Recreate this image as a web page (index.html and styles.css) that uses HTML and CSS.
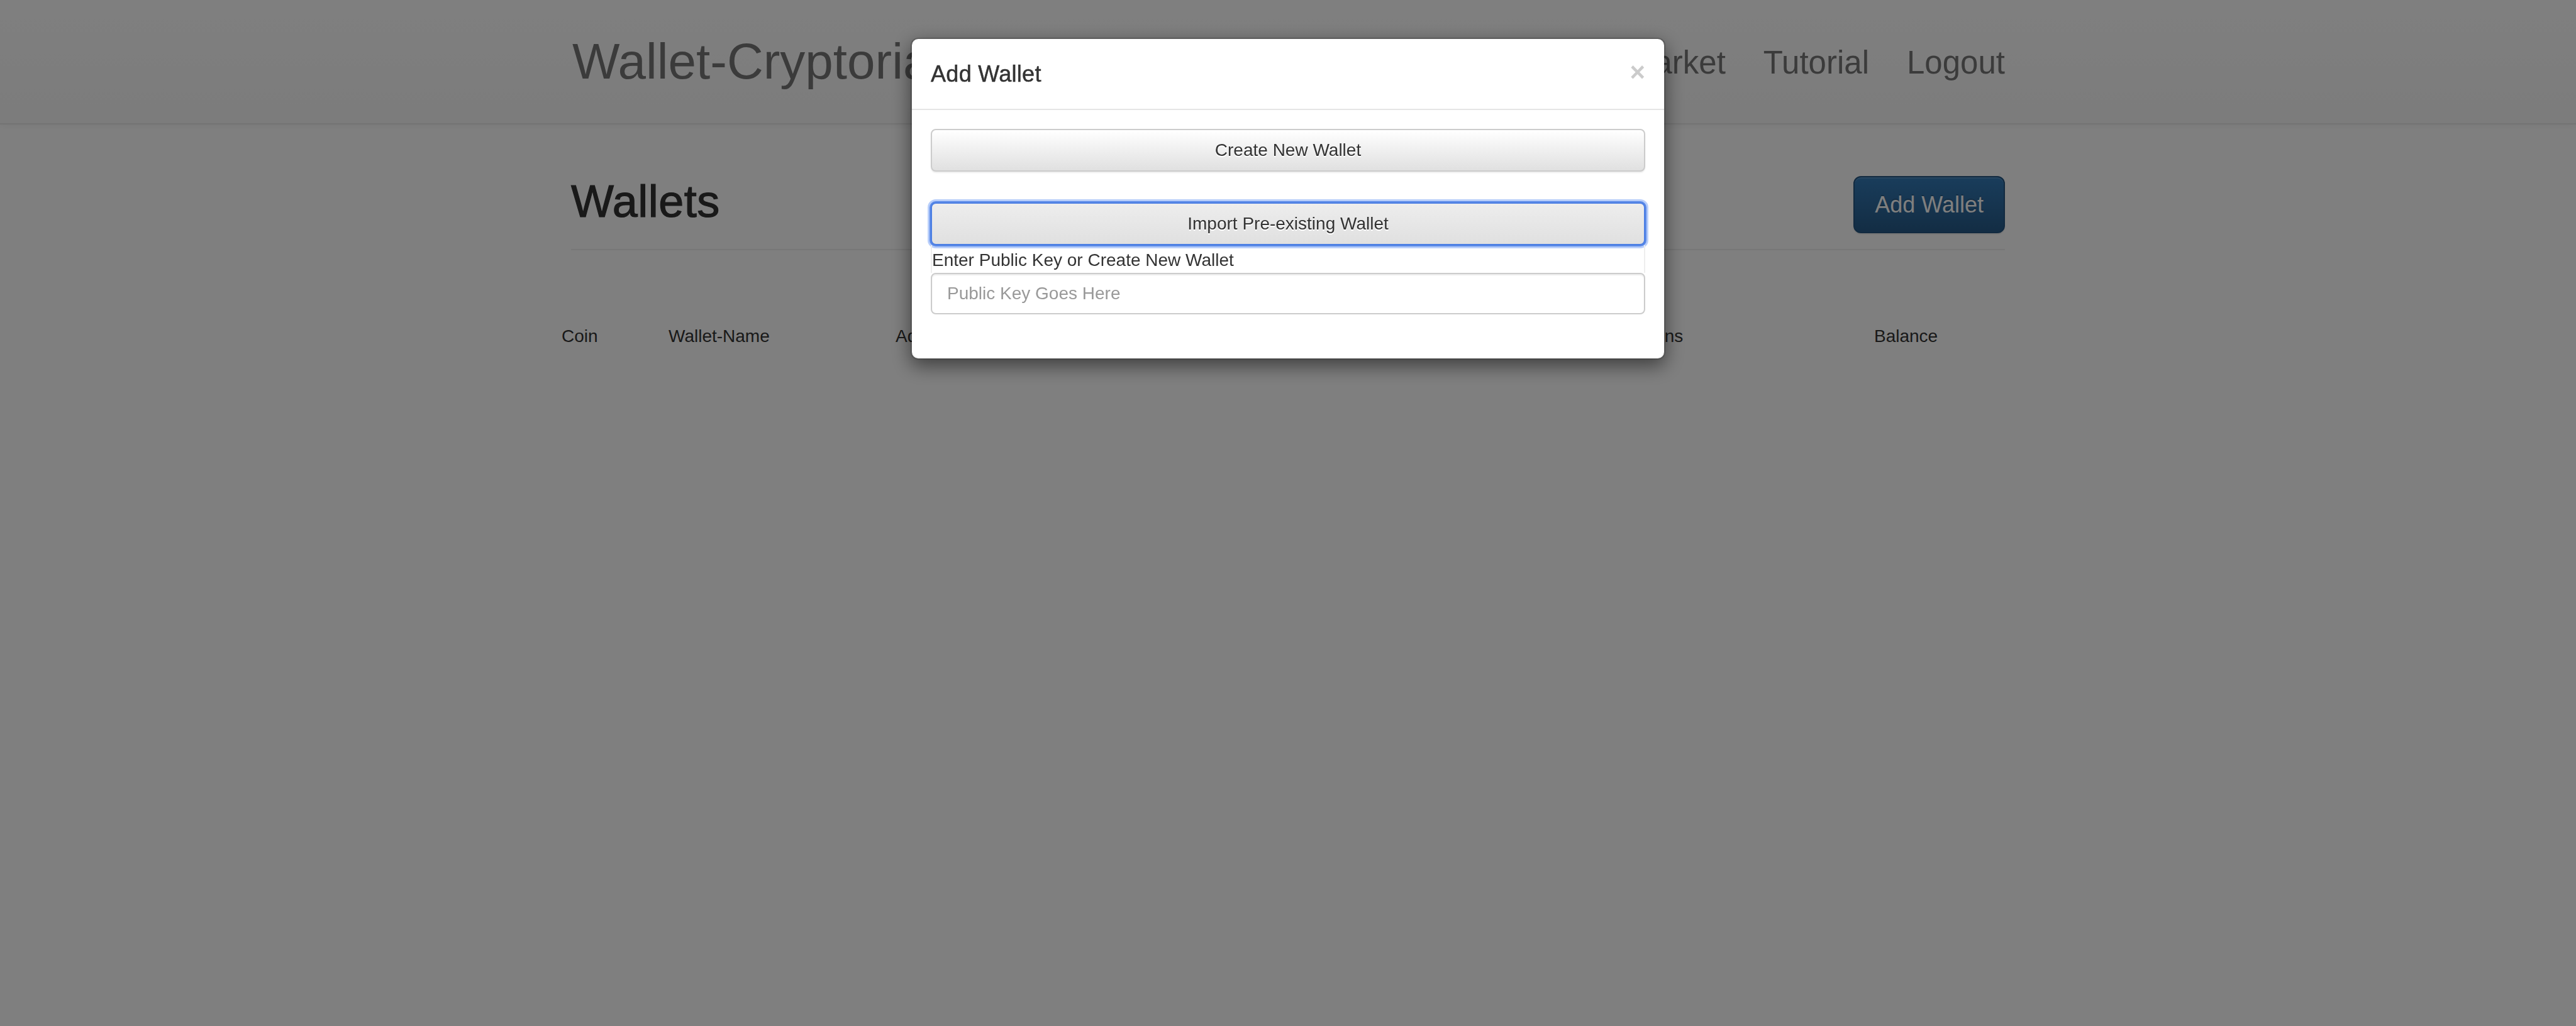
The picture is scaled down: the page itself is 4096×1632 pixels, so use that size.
FILE: index.html
```html
<!DOCTYPE html>
<html lang="en">
<head>
<meta charset="utf-8">
<title>Wallet-Cryptoria</title>
<link rel="stylesheet" href="styles.css">
</head>
<body>
<nav class="navbar">
  <div class="container navbar-inner">
    <a class="brand" href="#">Wallet-Cryptoria</a>
    <ul class="nav">
      <li><a href="#">Wallets</a></li>
      <li><a href="#">Market</a></li>
      <li><a href="#">Tutorial</a></li>
      <li><a href="#">Logout</a></li>
    </ul>
  </div>
</nav>

<main class="container">
  <div class="page-header">
    <h1 class="page-title">Wallets</h1>
    <button class="btn-primary-lg" type="button">Add Wallet</button>
  </div>
  <table class="wallet-table">
    <thead>
      <tr>
        <th class="col-coin">Coin</th>
        <th class="col-name">Wallet-Name</th>
        <th class="col-address">Address</th>
        <th class="col-tx">Transactions</th>
        <th class="col-balance">Balance</th>
      </tr>
    </thead>
    <tbody></tbody>
  </table>
</main>

<div class="backdrop"></div>

<div class="modal">
  <div class="modal-dialog">
    <div class="modal-content">
      <div class="modal-header">
        <button class="close" type="button">×</button>
        <h4 class="modal-title">Add Wallet</h4>
      </div>
      <div class="modal-body">
        <button class="btn-default btn-create" type="button">Create New Wallet</button>
        <button class="btn-default btn-import" type="button">Import Pre-existing Wallet</button>
        <div class="key-panel">
          <label class="key-label" for="pubkey">Enter Public Key or Create New Wallet</label>
          <input class="form-control" id="pubkey" type="text" placeholder="Public Key Goes Here">
        </div>
      </div>
    </div>
  </div>
</div>
</body>
</html>
```

FILE: styles.css
```css
* {
  box-sizing: border-box;
}

html, body {
  margin: 0;
  padding: 0;
}

body {
  width: 4096px;
  height: 1632px;
  background: #fff;
  color: #333;
  font-family: "Liberation Sans", Helvetica, Arial, sans-serif;
  font-size: 28px;
  line-height: 40px;
  overflow: hidden;
}

.container {
  width: 2340px;
  margin: 0 auto;
  padding: 0 30px;
}

/* Navbar */
.navbar {
  height: 198px;
  background-image: linear-gradient(to bottom, #fff 0, #f8f8f8 100%);
  border-bottom: 2px solid #e7e7e7;
  box-shadow: inset 0 2px 0 rgba(255, 255, 255, .15), 0 2px 10px rgba(0, 0, 0, .05);
}

.navbar-inner {
  display: flex;
  align-items: center;
  height: 196px;
}

.brand {
  color: #777;
  font-size: 80px;
  line-height: 1;
  text-decoration: none;
  margin-left: 2px;
  white-space: nowrap;
}

.nav {
  display: flex;
  list-style: none;
  margin: 3px -30px 0 auto;
  padding: 0;
}

.nav a {
  display: block;
  padding: 0 30px;
  color: #777;
  font-size: 51px;
  line-height: 1;
  text-decoration: none;
}

/* Page header */
.page-header {
  display: flex;
  justify-content: space-between;
  align-items: flex-start;
  margin-top: 82px;
  padding-bottom: 25px;
  border-bottom: 2px solid #eee;
}

.page-title {
  margin: 1px 0 0;
  font-size: 72px;
  line-height: 79px;
  font-weight: 500;
  color: #333;
  letter-spacing: .5px;
  -webkit-text-stroke: 1.2px #333;
}

.btn-primary-lg {
  height: 91px;
  padding: 0 32px;
  font-family: inherit;
  font-size: 36px;
  line-height: 48px;
  color: #fff;
  background-image: linear-gradient(to bottom, #337ab7 0, #265a88 100%);
  border: 2px solid #245580;
  border-radius: 12px;
  text-shadow: 0 -2px 0 rgba(0, 0, 0, .2);
  box-shadow: inset 0 2px 0 rgba(255, 255, 255, .15), 0 2px 2px rgba(0, 0, 0, .075);
}

/* Table */
.wallet-table {
  width: 2340px;
  margin: 101px -31px 0;
  border-collapse: collapse;
  table-layout: fixed;
}

.wallet-table th {
  padding: 16px;
  text-align: left;
  font-weight: normal;
  line-height: 40px;
  color: #333;
  white-space: nowrap;
}

.col-coin { width: 170px; }
.col-name { width: 361px; }
.col-address { width: 1093px; }
.col-tx { width: 463px; }
.col-balance { width: 253px; }

/* Modal */
.backdrop {
  position: fixed;
  inset: 0;
  background: rgba(0, 0, 0, .5);
  z-index: 10;
}

.modal {
  position: fixed;
  inset: 0;
  z-index: 20;
}

.modal-dialog {
  width: 1200px;
  margin: 60px auto;
}

.modal-content {
  background: #fff;
  border: 2px solid rgba(0, 0, 0, .2);
  border-radius: 12px;
  box-shadow: 0 10px 30px rgba(0, 0, 0, .5);
  background-clip: padding-box;
}

.modal-header {
  padding: 30px;
  border-bottom: 2px solid #e5e5e5;
}

.close {
  float: right;
  margin-top: 2px;
  padding: 0;
  border: 0;
  background: transparent;
  font-family: inherit;
  font-size: 42px;
  font-weight: bold;
  line-height: 1;
  color: #000;
  opacity: .2;
  text-shadow: 0 2px 0 #fff;
}

.modal-title {
  margin: 0;
  font-size: 36px;
  line-height: 51px;
  font-weight: 500;
  color: #333;
  letter-spacing: .3px;
  -webkit-text-stroke: .5px #333;
}

.modal-body {
  padding: 30px;
  display: flex;
  flex-direction: column;
}

.btn-default {
  display: block;
  width: 100%;
  height: 68px;
  padding: 0 24px;
  font-family: inherit;
  font-size: 28px;
  line-height: 40px;
  color: #333;
  text-align: center;
  background-color: #e0e0e0;
  background-image: linear-gradient(to bottom, #fff 0, #e0e0e0 100%);
  border: 2px solid #ccc;
  border-radius: 8px;
  text-shadow: 0 2px 0 #fff;
  box-shadow: inset 0 2px 0 rgba(255, 255, 255, .15), 0 2px 2px rgba(0, 0, 0, .075);
}

.btn-create {
  margin-top: 0;
}

.btn-import {
  margin-top: 49px;
  background-image: linear-gradient(to bottom, #ededed 0, #e0e0e0 100%);
  border-color: #4d7fe3;
  box-shadow: 0 0 0 2px #5a8ae8, 0 0 0 5px rgba(125, 165, 245, .55);
}

.key-panel {
  margin-bottom: 40px;
}

.key-label {
  display: block;
  height: 44px;
  padding-top: 4px;
  line-height: 40px;
  color: #333;
  border-left: 2px solid #eee;
  border-right: 2px solid #eee;
}

.form-control {
  display: block;
  width: 100%;
  height: 66px;
  padding: 12px 24px;
  font-family: inherit;
  font-size: 28px;
  line-height: 40px;
  color: #555;
  background: #fff;
  border: 2px solid #ccc;
  border-radius: 8px;
  box-shadow: inset 0 2px 2px rgba(0, 0, 0, .075);
}

.form-control::placeholder {
  color: #999;
}
```
